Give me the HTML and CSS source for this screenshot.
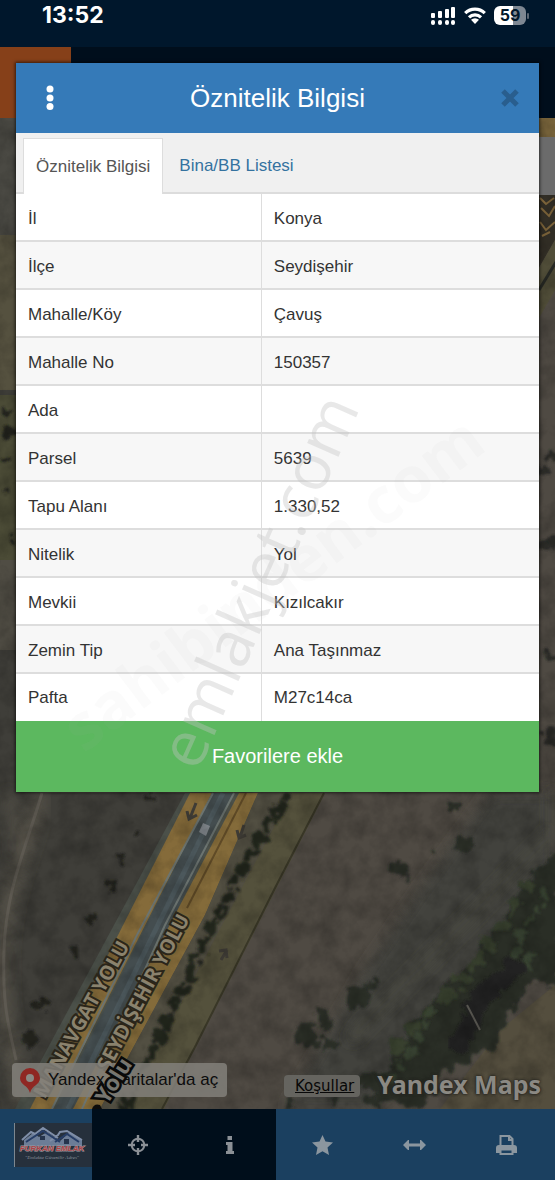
FILE: index.html
```html
<!DOCTYPE html>
<html lang="tr">
<head>
    <meta charset="UTF-8">
    <meta name="viewport" content="width=device-width, initial-scale=1.0">
    <title>Öznitelik Bilgisi</title>
    <link rel="stylesheet" href="styles.css">
</head>
<body>
    <div class="app">
        <div class="status-bar">
            <span class="time">13:52</span>
            <div class="status-icons">
                <svg width="25" height="18" viewBox="0 0 25 18" fill="#fff">
                    <rect x="0" y="6" width="4" height="5" rx="1"/>
                    <rect x="7" y="4" width="4" height="7" rx="1"/>
                    <rect x="14" y="2" width="4" height="9" rx="1"/>
                    <rect x="20" y="0" width="4" height="11" rx="1"/>
                    <rect x="0" y="13" width="4" height="5" rx="2"/>
                    <rect x="7" y="13" width="4" height="5" rx="2"/>
                    <rect x="14" y="13" width="4" height="5" rx="2"/>
                    <rect x="20" y="13" width="4" height="5" rx="2"/>
                </svg>
                <svg width="22" height="17" viewBox="0 0 22 17" fill="none" stroke="#fff" stroke-width="3.2">
                    <path d="M1.2 6.2a14 14 0 0 1 19.6 0"/>
                    <path d="M5 10.4a8.6 8.6 0 0 1 12 0"/>
                    <path d="M11 17l-4-4.2a5.8 5.8 0 0 1 8 0z" fill="#fff" stroke="none"/>
                </svg>
                <span class="battery">59</span>
            </div>
        </div>
        <header class="top-bar">
            <button class="menu-btn" aria-label="Menü"></button>
        </header>

        <main class="map">
            <svg class="map-image" viewBox="0 118 555 991" preserveAspectRatio="xMidYMax slice">
                <defs>
                    <filter id="rough" x="-10%" y="-10%" width="120%" height="120%">
                        <feTurbulence type="fractalNoise" baseFrequency="0.08" numOctaves="3" seed="4"/>
                        <feDisplacementMap in="SourceGraphic" scale="22" xChannelSelector="R" yChannelSelector="G"/>
                        <feGaussianBlur stdDeviation="0.8"/>
                    </filter>
                    <filter id="soft" x="-20%" y="-20%" width="140%" height="140%">
                        <feGaussianBlur stdDeviation="7"/>
                    </filter>
                    <filter id="grain" x="0" y="0" width="100%" height="100%">
                        <feTurbulence type="fractalNoise" baseFrequency="0.05" numOctaves="5" seed="9"/>
                        <feColorMatrix values="0 0 0 0 0  0 0 0 0 0  0 0 0 0 0  1 0 0 0 -0.35"/>
                    </filter>
                </defs>
                <rect y="118" width="555" height="991" fill="#4f4a43"/>

                <!-- land left of the road -->
                <path d="M0 118H40V793H190L20 1109H0z" fill="#3f3e39"/>
                <path d="M0 118H40V235H0z" fill="#4a4943"/>
                <path d="M0 235H40V390H0z" fill="#55513f"/>
                <path d="M0 395H40V560H0z" fill="#4b4b36"/>
                <path d="M0 560H40V650H0z" fill="#504d44"/>
                <g fill="none" stroke="#56524a" filter="url(#soft)">
                    <path d="M42 793C25 850 5 890 2 950S10 1040 22 1109" stroke-width="14"/>
                    <path d="M8 793C18 830 22 850 14 890" stroke-width="7"/>
                </g>
                <path d="M42 793C25 850 6 890 4 950S10 1030 16 1060" fill="none" stroke="#5d5951" stroke-width="3"/>
                <g fill="#20221c" filter="url(#rough)">
                    <circle cx="151" cy="797" r="4"/><circle cx="134" cy="831" r="4"/>
                    <circle cx="119" cy="858" r="5"/><circle cx="108" cy="884" r="5"/>
                    <circle cx="92" cy="918" r="5"/><circle cx="74" cy="950" r="6"/>
                    <circle cx="42" cy="1005" r="5"/><circle cx="30" cy="1038" r="8"/>
                    <circle cx="8" cy="412" r="4"/><circle cx="10" cy="432" r="5"/>
                    <circle cx="6" cy="457" r="4"/><circle cx="5" cy="492" r="4"/><circle cx="11" cy="540" r="3"/>
                </g>

                <!-- roads -->
                <path d="M185 793H270L100 1109H15z" fill="#4b5049"/>
                <path d="M190 793H212L52 1109H30z" fill="#856b3a"/>
                <path d="M212 793H233L82 1109H55z" fill="#444d4f"/>
                <path d="M239 793H258L205 915L100 1109H73z" fill="#846b3a"/>
                <path d="M205 915L258 793H292L130 1109H100z" fill="#524f42"/>
                <g fill="none" stroke="#6c7470" stroke-width="2">
                    <path d="M213 793L137 935L52 1109"/>
                    <path d="M234 793L165 925L82 1109"/>
                </g>
                <path d="M223 793L148 945L68 1109" fill="none" stroke="#4c585c" stroke-width="5"/>
                <path d="M246 793L187 908" fill="none" stroke="#604b27" stroke-width="2"/>
                <path d="M292 793H325L164 1109H125z" fill="#54513c"/>
                <path d="M324 793L275 888L196 1045L162 1109" fill="none" stroke="#393727" stroke-width="2"/>
                <path d="M288 793L235 880L150 1055L122 1109" fill="none" stroke="#23251f" stroke-width="10" stroke-linecap="round" stroke-dasharray="6 11" filter="url(#rough)"/>
                <g fill="none" stroke="#3f3c36" stroke-width="3">
                    <path d="M196 803L190 818M187 811l2 8 8-4"/>
                    <path d="M244 825l-4 12M237 830l2 8 7-3"/>
                    <path d="M221 960l6-10M219 951l7-1 1 8"/>
                </g>
                <path d="M199 832l4-9 7 3-4 10z" fill="#7f858a"/>

                <!-- scrub and trees on the right -->
                <path d="M490 793H555V910L370 1109H285L365 970L420 890z" fill="#42433d" filter="url(#soft)"/>
                <path d="M555 793V830L350 1040" fill="none" stroke="#4c4b43" stroke-width="7" filter="url(#soft)"/>
                <path d="M555 985L500 1030L440 1109H555z" fill="#544e3e"/>
                <path d="M560 850L525 880L500 920L475 960L445 990L408 1020L395 1060L365 1100L420 1109L450 1070L490 1050L530 980L560 990z" fill="#292f28" filter="url(#rough)"/>
                <path d="M527 885L500 930L470 970L440 1000L405 1035L390 1065" fill="none" stroke="#37412f" stroke-width="15" stroke-linecap="round" stroke-dasharray="1 22" filter="url(#rough)"/>
                <path d="M545 895L515 945L535 975M432 1010L408 1060L385 1085" fill="none" stroke="#384331" stroke-width="9" stroke-linecap="round" stroke-dasharray="1 15" filter="url(#rough)"/>
                <path d="M520 960L480 1000L455 1050" fill="none" stroke="#232422" stroke-width="20" filter="url(#rough)"/>
                <g fill="#2b2e28" filter="url(#rough)">
                    <circle cx="452" cy="806" r="6"/><circle cx="462" cy="845" r="10"/>
                    <circle cx="402" cy="868" r="7"/><circle cx="430" cy="851" r="3"/>
                    <circle cx="355" cy="998" r="12"/><circle cx="370" cy="986" r="7"/>
                    <circle cx="307" cy="1035" r="12"/><circle cx="325" cy="1018" r="9"/>
                    <circle cx="328" cy="1043" r="8"/><circle cx="372" cy="1080" r="12"/>
                    <circle cx="333" cy="1102" r="7"/><circle cx="290" cy="1104" r="5"/>
                </g>
                <path d="M467 1005l13 25" stroke="#5b5953" stroke-width="2"/>

                <!-- right edge -->
                <path d="M535 118H555V137H535z" fill="#77633a"/>
                <path d="M535 195H555V240L535 275z" fill="#343027"/>
                <path d="M540 198l6 6 8-6M541 208l8 8 6-10M540 222l6 8 9-8M542 236l8-4" fill="none" stroke="#80673c" stroke-width="2"/>
                <path d="M535 275L555 240V290L535 325z" fill="#504d38"/>
                <path d="M539 290L556 262" stroke="#292b26" stroke-width="3"/>
                <g fill="#292b27" filter="url(#rough)">
                    <circle cx="543" cy="470" r="6"/><circle cx="553" cy="455" r="6"/>
                    <circle cx="545" cy="545" r="7"/><circle cx="554" cy="540" r="6"/>
                    <circle cx="548" cy="655" r="4"/><circle cx="550" cy="735" r="7"/>
                </g>
                <rect y="118" width="555" height="991" filter="url(#grain)" opacity="0.4"/>
                <path d="M535 137H555V195H535z" fill="#6b6b6b"/>

                <g class="road-label">
                    <text transform="translate(130 946) rotate(-61)" text-anchor="end">MANAVGAT YOLU</text>
                    <text transform="translate(190 919) rotate(-62)" text-anchor="end">SEYDİŞEHİR YOLU</text>
                </g>
            </svg>

            <div class="map-footer">
                <a class="open-maps" href="#">
                    <svg width="20" height="25" viewBox="0 0 20 25">
                        <path d="M10 0a10 10 0 0 0-10 10c0 7 8 7 10 15 2-8 10-8 10-15a10 10 0 0 0-10-10z" fill="#8f2723"/>
                        <circle cx="10" cy="10" r="4" fill="#8b8984"/>
                    </svg>
                    <span>Yandex Haritalar'da aç</span>
                </a>
                <a class="terms" href="#">Koşullar</a>
                <span class="brand">Yandex Maps</span>
            </div>
            <svg class="map-image front" viewBox="0 118 555 991" preserveAspectRatio="xMidYMax slice">
                <path d="M92 1109q2-6 8-4l2 4z" fill="#0c0c0b"/>
                <text class="street-label" transform="translate(133 1064) rotate(-58)" text-anchor="end">Yolu</text>
            </svg>
        </main>

        <nav class="toolbar">
            <button class="tool brand-tool" aria-label="Furkan Emlak">
                <svg class="logo" width="78" height="44" viewBox="0 0 78 44">
                    <rect width="78" height="44" fill="#26303c"/>
                    <path d="M0 0v44" stroke="#7c8790" stroke-width="2"/>
                    <path d="M10 23v-6l9-7 6 4 8-5 13 9 10-9 12 8v6z" fill="#6c7d97"/>
                    <path d="M8 17l9-8 4 2 8-6 15 10M36 18l8-6 2-3 7-1 15 9" fill="none" stroke="#7f8ea8" stroke-width="2"/>
                    <path d="M12 19l17-11 17 11M41 19l12-8 12 8" fill="none" stroke="#263d66" stroke-width="2"/>
                    <path d="M26 13h5v4h-5zM50 16h5v5h-5z" fill="#25344d"/>
                    <text class="logo-name" x="38" y="28" text-anchor="middle">FURKAN EMLAK</text>
                    <text class="logo-slogan" x="38" y="36" text-anchor="middle">"Emlakta Güvenilir Adres"</text>
                </svg>
            </button>
            <button class="tool dark" aria-label="Konum">
                <svg width="20" height="20" viewBox="0 0 20 20" fill="none" stroke="#8b9096">
                    <circle cx="10" cy="10" r="6.3" stroke-width="2"/>
                    <path d="M10 0v7M10 13v7M0 10h7M13 10h7" stroke-width="2.4"/>
                </svg>
            </button>
            <button class="tool dark" aria-label="Bilgi">
                <svg width="10" height="18" viewBox="0 0 10 18" fill="#8b9096">
                    <path d="M2.500 0h4.500v4h-4.500zM1 6h6.500v9H9v3H1v-3h1.500V9H1z"/>
                </svg>
            </button>
            <button class="tool" aria-label="Favoriler">
                <svg width="21" height="20" viewBox="0 0 21 20" fill="#8b969f">
                    <path d="M10.500 0l3 6.600 7.500.9-5.500 5 1.500 7.500-6.500-3.700L4 20l1.500-7.500L0 7.500l7.500-.9z"/>
                </svg>
            </button>
            <button class="tool" aria-label="Ölçüm">
                <svg width="23" height="10" viewBox="0 0 23 10" fill="#8b969f">
                    <path d="M0 5l5-5h1v3.500h11V0h1l5 5-5 5h-1V6.500H6V10H5z"/>
                </svg>
            </button>
            <button class="tool" aria-label="Yazdır">
                <svg width="21" height="20" viewBox="0 0 21 20" fill="none" stroke="#8b969f" stroke-width="2">
                    <path d="M4.500 11V1h9l3 3v7M13 1v4h4"/>
                    <path d="M1 17v-4q0-2 2-2h15q2 0 2 2v4z" fill="#8b969f"/>
                    <path d="M4.500 14.500h12V19h-12z" fill="#1b4060"/>
                </svg>
            </button>
        </nav>

        <section class="modal">
            <div class="modal-header">
                <button class="more" aria-label="Seçenekler">
                    <svg width="8" height="26" viewBox="0 0 8 26" fill="#fff">
                        <circle cx="4" cy="4" r="3.500"/><circle cx="4" cy="13" r="3.500"/><circle cx="4" cy="21.500" r="3.500"/>
                    </svg>
                </button>
                <h1>Öznitelik Bilgisi</h1>
                <button class="close" aria-label="Kapat">
                    <svg width="18" height="18" viewBox="0 0 18 18" fill="none" stroke="#295e8e" stroke-width="5">
                        <path d="M2 2l14 14M16 2L2 16"/>
                    </svg>
                </button>
            </div>
            <div class="tabs">
                <button class="tab active">Öznitelik Bilgisi</button>
                <button class="tab">Bina/BB Listesi</button>
            </div>
            <table class="info">
                <tbody>
                    <tr><th scope="row">İl</th><td>Konya</td></tr>
                    <tr><th scope="row">İlçe</th><td>Seydişehir</td></tr>
                    <tr><th scope="row">Mahalle/Köy</th><td>Çavuş</td></tr>
                    <tr><th scope="row">Mahalle No</th><td>150357</td></tr>
                    <tr><th scope="row">Ada</th><td></td></tr>
                    <tr><th scope="row">Parsel</th><td>5639</td></tr>
                    <tr><th scope="row">Tapu Alanı</th><td>1.330,52</td></tr>
                    <tr><th scope="row">Nitelik</th><td>Yol</td></tr>
                    <tr><th scope="row">Mevkii</th><td>Kızılcakır</td></tr>
                    <tr><th scope="row">Zemin Tip</th><td>Ana Taşınmaz</td></tr>
                    <tr><th scope="row">Pafta</th><td>M27c14ca</td></tr>
                </tbody>
            </table>
            <button class="favorite">Favorilere ekle</button>
            <svg class="watermark" viewBox="0 0 524 730">
                <text class="wm-back" transform="translate(68 692) rotate(-37)">sahibinden.com</text>
                <text class="wm-front" transform="translate(182 711) rotate(-66)">emlakjet.com</text>
            </svg>
        </section>
    </div>
</body>
</html>
```
FILE: styles.css
```css
* {
    box-sizing: border-box;
}
body {
    margin: 0;
    font-family: "Liberation Sans", Arial, sans-serif;
    font-size: 17px;
    background: #00162b;
}
button {
    border: none;
    padding: 0;
    background: none;
    font: inherit;
    color: inherit;
    cursor: pointer;
}
svg {
    display: block;
}
.app {
    position: relative;
    display: flex;
    flex-direction: column;
    min-height: 100vh;
}

/* status bar */
.status-bar {
    display: flex;
    justify-content: space-between;
    height: 47px;
    padding: 3px 29px 0 42px;
    background: #00172c;
    color: #fff;
}
.time {
    font: bold 23px/25px Inter, sans-serif;
}
.status-icons {
    display: flex;
    align-items: center;
    gap: 8px;
    height: 25px;
}
.battery {
    position: relative;
    width: 32px;
    height: 19px;
    border-radius: 6px;
    background: linear-gradient(90deg, #fff 59%, #7e8792 59%);
    color: #00172c;
    font: bold 16px/19px Inter, sans-serif;
    text-align: center;
}
.battery::after {
    content: "";
    position: absolute;
    right: -3px;
    top: 7px;
    width: 2px;
    height: 6px;
    border-radius: 1px;
    background: #5b6673;
}

/* header behind the modal */
.top-bar {
    display: flex;
    height: 71px;
    background: #000e1c;
}
.menu-btn {
    width: 71px;
    background: #864019;
}

/* map */
.map {
    position: relative;
    flex: 1;
    display: flex;
    align-items: flex-end;
    background: #4b4740;
}
.map-image {
    position: absolute;
    left: 0;
    top: 0;
    width: 100%;
    height: 100%;
}
.front {
    pointer-events: none;
}
.road-label {
    font: bold 20px "Open Sans", sans-serif;
    fill: #8a826d;
    stroke: #2a251a;
    stroke-width: 4px;
    paint-order: stroke;
}
.street-label {
    font: bold 22px "Open Sans", sans-serif;
    fill: #77756f;
    stroke: #090909;
    stroke-width: 5px;
    paint-order: stroke;
}
.map-footer {
    position: relative;
    display: flex;
    align-items: flex-end;
    width: 100%;
    padding: 0 14px 12px 12px;
}
.open-maps {
    display: flex;
    align-items: center;
    gap: 8px;
    height: 34px;
    padding: 0 9px 0 8px;
    border-radius: 4px;
    background: rgba(130, 128, 122, 0.85);
    color: #0c0c0c;
    text-decoration: none;
    white-space: nowrap;
}
.terms {
    margin-left: auto;
    padding: 0 6px 0 11px;
    border-radius: 4px;
    background: #65645f;
    color: #080808;
    font: 15px/22px "DejaVu Sans", Verdana, sans-serif;
}
.brand {
    margin-left: 17px;
    color: #8b8983;
    font: bold 25px/26px "Noto Sans", sans-serif;
    text-shadow: 0 0 3px #24231f, 0 0 3px #24231f;
    white-space: nowrap;
}

/* bottom toolbar */
.toolbar {
    display: grid;
    grid-template-columns: repeat(6, minmax(0, 1fr));
    height: 71px;
    padding-right: 3px;
    background: #1b4060;
}
.tool {
    display: flex;
    align-items: center;
    justify-content: center;
    background: #1b4060;
}
.tool.dark {
    background: #000e1b;
}
.brand-tool {
    justify-content: flex-end;
}
.logo-name {
    font: italic bold 8px "Liberation Sans", sans-serif;
    fill: #ad4144;
    stroke: #9c9da3;
    stroke-width: 1px;
    paint-order: stroke;
}
.logo-slogan {
    font: italic 5px "Liberation Serif", serif;
    fill: #8c949c;
}

/* modal */
.modal {
    position: absolute;
    top: 63px;
    left: 16px;
    right: 16px;
    background: #fff;
    box-shadow: 0 0 3px 1px rgba(0, 0, 0, 0.6);
}
.modal-header {
    display: flex;
    align-items: center;
    justify-content: space-between;
    height: 70px;
    padding: 0 20px 0 30px;
    background: #357ab8;
    color: #fff;
}
.modal-header h1 {
    margin: 0;
    font-size: 26px;
    font-weight: normal;
}
.tabs {
    display: flex;
    height: 61px;
    padding: 5px 7px 0;
    background: #f0f0f0;
    border-bottom: 2px solid #dcdcdc;
}
.tab {
    margin-bottom: -2px;
    padding: 0 16px;
    color: #34729f;
}
.tab.active {
    padding: 0 12px;
    border: 1px solid #ddd;
    border-bottom: none;
    background: #fff;
    color: #555;
}
.info {
    width: 100%;
    border-collapse: separate;
    border-spacing: 0;
    table-layout: fixed;
    color: #333;
}
.info th,
.info td {
    height: 48px;
    padding: 3px 12px 0;
    border-bottom: 2px solid #ddd;
    font-weight: normal;
    text-align: left;
}
.info th {
    width: 47%;
    border-right: 1px solid #ddd;
}
.info tr:nth-child(even) {
    background: #f7f7f7;
}
.info tr:last-child th,
.info tr:last-child td {
    height: 47px;
    padding-top: 0;
    border-bottom: none;
}
.favorite {
    display: block;
    width: 100%;
    height: 71px;
    background: #5cb85f;
    color: #fff;
    font-size: 20px;
}
.watermark {
    position: absolute;
    left: 0;
    top: 0;
    width: 100%;
    height: 100%;
    pointer-events: none;
}
.wm-front {
    font: 64px "Open Sans", sans-serif;
    fill: rgba(195, 195, 195, 0.38);
}
.wm-back {
    font: bold 64px "Open Sans", sans-serif;
    fill: rgba(170, 180, 175, 0.05);
}
```
